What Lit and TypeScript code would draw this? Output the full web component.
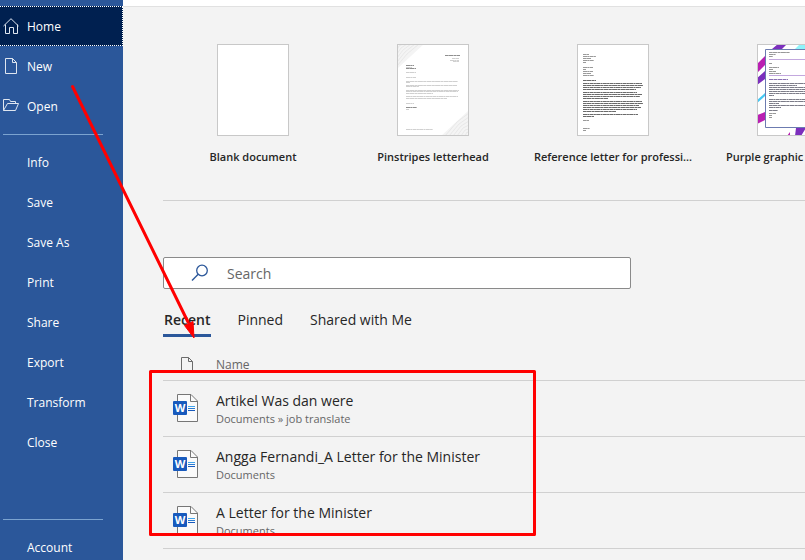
import { LitElement, html, svg, css } from "lit";
import { customElement, state } from "lit/decorators.js";

type Line = [x1: number, x2: number, y: number];

const pinstripeLines: Line[] = [
  [55, 62, 14], [53, 62, 16], [56, 62, 17], [9, 15, 23], [9, 19, 28], [9, 19, 33],
  [9, 61, 37], [9, 13, 38], [9, 60, 41], [9, 22, 42], [9, 62, 46], [9, 61, 47], [9, 36, 49],
  [9, 61, 52], [9, 50, 54], [9, 17, 59], [9, 12, 65], [9, 36, 85],
];
const pinstripeStrong: Line[] = [[48, 63, 11], [9, 17, 21], [9, 19, 24], [9, 20, 63]];

const referenceLines: Line[] = [
  [6, 12, 10], [6, 19, 12], [6, 14, 14], [6, 17, 16], [6, 9, 18],
  [6, 16, 23], [6, 9, 25], [6, 16, 27], [6, 14, 29], [6, 17, 31],
  [6, 12, 76], [6, 13, 84], [6, 9, 86],
];
const referenceStrong: Line[] = [
  [6, 19, 36], [6, 65, 39], [6, 66, 41], [6, 64, 43], [6, 59, 45],
  [6, 60, 48], [6, 65, 50], [6, 63, 52], [6, 31, 54],
  [6, 65, 57], [6, 66, 59], [6, 62, 61], [6, 64, 63], [6, 60, 65], [6, 39, 67],
  [6, 61, 70], [6, 17, 72],
];

const purpleLines: Line[] = [
  [12, 33, 8], [12, 19, 10], [12, 16, 12], [12, 15, 19], [12, 22, 23], [12, 16, 25],
  [12, 19, 27], [12, 24, 29], [12, 19, 69], [12, 15, 71], [12, 15, 73],
];
const purpleStrong: Line[] = [
  [12, 70, 39], [12, 40, 41], [12, 70, 43], [12, 70, 45], [12, 70, 47], [12, 70, 49], [12, 17, 51],
  [12, 70, 55], [12, 70, 57], [12, 22, 59], [12, 70, 61], [12, 24, 63], [12, 21, 66],
];

const rows = (lines: Line[], color: string) =>
  lines.map(
    ([x1, x2, y], i) => svg`<path d="M${x1} ${y + 0.5}H${x2}" stroke=${color} stroke-width="1"
      stroke-dasharray=${i % 2 ? "4 .3 2 .3" : "3 .3 5 .3"} />`,
  );

const steps = (count: number) => Array.from({ length: count }, (_, i) => i);

const thumbs = {
  blank: svg``,
  pinstripes: svg`
    <path d="M0 0H27L0 25Z M72 66V92H44Z" fill="#f4f4f4" />
    ${steps(6).map((i) => svg`<path d="M${i * 2} ${i * 2}L${i * 4 + 2} 0M${i * 2} ${i * 2}L0 ${i * 4 + 2}" stroke="#e2e2e2" stroke-width=".7" />
      <path d="M${60 + i * 2} ${78 + i * 2}L${48 + i * 4} 92M${60 + i * 2} ${78 + i * 2}L72 ${69 + i * 4}" stroke="#e2e2e2" stroke-width=".7" />`)}
    ${rows(pinstripeLines, "#d0d0d0")} ${rows(pinstripeStrong, "#8f8f8f")}`,
  reference: svg`${rows(referenceLines, "#9a9a9a")} ${rows(referenceStrong, "#6a6a6a")}`,
  purple: svg`
    <path d="M15 5L21 0H30L25 5Z M0 34L8 27V35L0 41Z M39 84H49L44 92H38Z" fill="#7c2fbd" />
    <path d="M38 5L43 0H54L49 5Z" fill="#8ff3fb" />
    <path d="M0 20L8 12V21L0 29Z M0 71L8 68V76L0 80Z M12 0H16L14 1H12Z M30 92L33 88V92Z" fill="#b91fb2" />
    <path d="M0 56L8 49V52L0 59Z" fill="#45c8f3" />
    <path d="M8.500 5.500H72V83.500H8.500Z" fill="#fff" stroke="#6c7bb0" />
    <path d="M12 15.500H68M12 31.500H68" stroke="#c3a8de" />
    <path d="M12 35.500H31" stroke="#8b6fb4" stroke-dasharray="4 .5" />
    ${rows(purpleLines, "#989898")} ${rows(purpleStrong, "#7c7c88")}`,
};

const templates = [
  { name: "Blank document", art: thumbs.blank },
  { name: "Pinstripes letterhead", art: thumbs.pinstripes },
  { name: "Reference letter for professi...", art: thumbs.reference },
  { name: "Purple graphic", art: thumbs.purple, long: true },
];

const files = [
  { name: "Artikel Was dan were", place: "Documents » job translate" },
  { name: "Angga Fernandi_A Letter for the Minister", place: "Documents" },
  { name: "A Letter for the Minister", place: "Documents" },
];

const homeIcon = svg`<path d="M.5 8L8 .7L15.500 8M2.500 6.500V15.500H6.500V9.500H10.500V15.500H14.500V6.500" />`;
const newIcon = svg`<path d="M2.500 .5H9.500L13.500 4.500V15.500H2.500ZM9.500 .5V4.500H13.500" />`;
const openIcon = svg`<path d="M.5 12.500V1.500H6.500L7.500 3.500H12.500V5.500M.5 12.500L4.500 5.500H15.500L12.500 12.500H.5" />`;

@customElement("app-root")
export class AppRoot extends LitElement {
  @state() private tab = "Recent";

  static styles = css`
    :host {
      display: block;
      font-family: "Open Sans", "Noto Sans", sans-serif;
      font-size: 12px;
      color: #262626;
    }
    .shell {
      position: relative;
      display: flex;
      height: 100vh;
      overflow: hidden;
      background: #f3f3f3;
    }
    .side {
      flex: 0 0 123px;
      box-sizing: border-box;
      padding-top: 6px;
      background: #2b579a;
    }
    .group { display: flex; flex-direction: column; }
    .item {
      box-sizing: border-box;
      display: flex;
      align-items: center;
      gap: 8px;
      height: 40px;
      padding-left: 3px;
      color: #fff;
      text-decoration: none;
    }
    .plain { padding-left: 27px; }
    .active {
      background: #002050;
      border: 1px dotted #fff;
      border-left: 0;
    }
    .icon { width: 16px; height: 16px; fill: none; stroke: #dfe6f0; flex: none; }
    .rule { height: 1px; margin: 8px 20px 7px 3px; background: #7ba3d0; }
    .gap { margin-top: 57px; }
    .main { flex: 1; min-width: 0; }
    .bar { height: 6px; background: #fff; border-bottom: 1px solid #e1e1e1; }
    .content { padding-left: 40px; }
    .templates {
      display: flex;
      height: 156px;
      padding-top: 37px;
      border-bottom: 1px solid #d0d0d0;
    }
    .card {
      flex: 0 0 180px;
      display: flex;
      flex-direction: column;
      align-items: center;
      gap: 12px;
      padding: 0;
      border: 0;
      background: none;
      font: 600 11px/18px "Open Sans", sans-serif;
      color: #262626;
      white-space: nowrap;
    }
    .long { min-width: 134px; text-align: left; }
    .thumb { width: 70px; height: 90px; background: #fff; border: 1px solid #c8c8c8; }
    .search {
      box-sizing: border-box;
      display: flex;
      align-items: center;
      max-width: 468px;
      height: 32px;
      margin-top: 56px;
      padding-left: 27px;
      gap: 18px;
      border: 1px solid #8a8a8a;
      border-radius: 2px;
      background: #fff;
    }
    .glass { width: 18px; height: 18px; fill: none; stroke: #2b579a; }
    .field {
      flex: 1;
      min-width: 0;
      padding: 1px 0 0;
      border: 0;
      outline: 0;
      background: none;
      font: 14px/20px "Open Sans", sans-serif;
    }
    .field::placeholder { color: #666; opacity: 1; }
    .tabs { display: flex; gap: 25px; margin-top: 19px; }
    .tab {
      padding: 0 1px 3px;
      border: 0;
      border-bottom: 3px solid transparent;
      background: none;
      font: 14px/23px "Open Sans", sans-serif;
      color: #262626;
    }
    .chosen { font-weight: 600; border-bottom-color: #2b579a; }
    .files { width: 100%; margin-top: 12px; border-collapse: collapse; }
    .files th, .files td { padding: 0; text-align: left; border-bottom: 1px solid #d0d0d0; }
    .files th { height: 31px; font-weight: 400; color: #666; }
    .files td { height: 55px; }
    .files .kind { width: 53px; }
    .doc { display: block; width: 16px; height: 16px; margin-left: 16px; fill: none; stroke: #6b6b6b; }
    .word { display: block; width: 26px; height: 28px; margin: 0 0 1px 10px; }
    .w { font: 700 11px "Open Sans", sans-serif; fill: #fff; }
    .name { display: block; font-size: 14px; line-height: 20px; color: #262626; text-decoration: none; }
    .place { font-size: 11px; line-height: 16px; color: #666; }
    .marks { position: absolute; top: 0; left: 0; width: 540px; height: 540px; pointer-events: none; }
  `;

  private plain(label: string) {
    return html`<a class="item plain" href="#">${label}</a>`;
  }

  render() {
    return html`<div class="shell">
      <nav class="side">
        <div class="group">
          <a class="item active" href="#"><svg class="icon" viewBox="0 0 16 16">${homeIcon}</svg>Home</a>
          <a class="item" href="#"><svg class="icon" viewBox="0 0 16 16">${newIcon}</svg>New</a>
          <a class="item" href="#"><svg class="icon" viewBox="0 0 16 16">${openIcon}</svg>Open</a>
        </div>
        <div class="rule"></div>
        <div class="group">
          ${["Info", "Save", "Save As", "Print", "Share", "Export", "Transform", "Close"].map((l) => this.plain(l))}
        </div>
        <div class="rule gap"></div>
        ${this.plain("Account")}
      </nav>
      <main class="main">
        <div class="bar"></div>
        <div class="content">
          <div class="templates">
            ${templates.map(
              (t) => html`<button class="card">
                <svg class="thumb" viewBox="1 1 70 90">${t.art}</svg>
                <span class=${t.long ? "long" : ""}>${t.name}</span>
              </button>`,
            )}
          </div>
          <label class="search">
            <svg class="glass" viewBox="0 0 18 18">
              <circle cx="11" cy="6.500" r="5.300" stroke-width="1.300" />
              <path d="M7.200 10.300L1 16.500" stroke-width="1.400" />
            </svg>
            <input class="field" type="search" placeholder="Search" aria-label="Search" />
          </label>
          <div class="tabs" role="tablist">
            ${["Recent", "Pinned", "Shared with Me"].map(
              (t) => html`<button
                role="tab"
                class="tab ${t === this.tab ? "chosen" : ""}"
                @click=${() => (this.tab = t)}
              >${t}</button>`,
            )}
          </div>
          <table class="files">
            <thead>
              <tr>
                <th class="kind"><svg class="doc" viewBox="0 0 16 16">${newIcon}</svg></th>
                <th>Name</th>
              </tr>
            </thead>
            <tbody>
              ${files.map(
                (f) => html`<tr>
                  <td class="kind">
                    <svg class="word" viewBox="0 0 26 28">
                      <path d="M4.500 .5H18L24.500 7V27.500H4.500Z" fill="#fafafa" stroke="#767676" />
                      <path d="M17.500 .5V7.500H24.500" fill="none" stroke="#767676" />
                      <path d="M15 12.500H22" stroke="#41a5ee" />
                      <path d="M15 14.500H22" stroke="#2b7cd3" />
                      <path d="M15 16.500H22" stroke="#185abd" />
                      <rect y="7" width="14" height="14" rx="1" fill="#185abd" />
                      <text class="w" x="7" y="18" text-anchor="middle">W</text>
                    </svg>
                  </td>
                  <td>
                    <a class="name" href="#">${f.name}</a>
                    <div class="place">${f.place}</div>
                  </td>
                </tr>`,
              )}
            </tbody>
          </table>
        </div>
      </main>
      <svg class="marks" viewBox="0 0 540 540" aria-hidden="true">
        <path d="M72.500 86.500L188 322" stroke="#f00" stroke-width="3" stroke-linecap="round" />
        <path d="M194 338L184.500 325.500L193 321.500Z" fill="#f00" stroke="#f00" />
        <rect x="150.500" y="371.500" width="384" height="163" fill="none" stroke="#f00" stroke-width="3" stroke-linejoin="round" />
      </svg>
    </div>`;
  }
}
